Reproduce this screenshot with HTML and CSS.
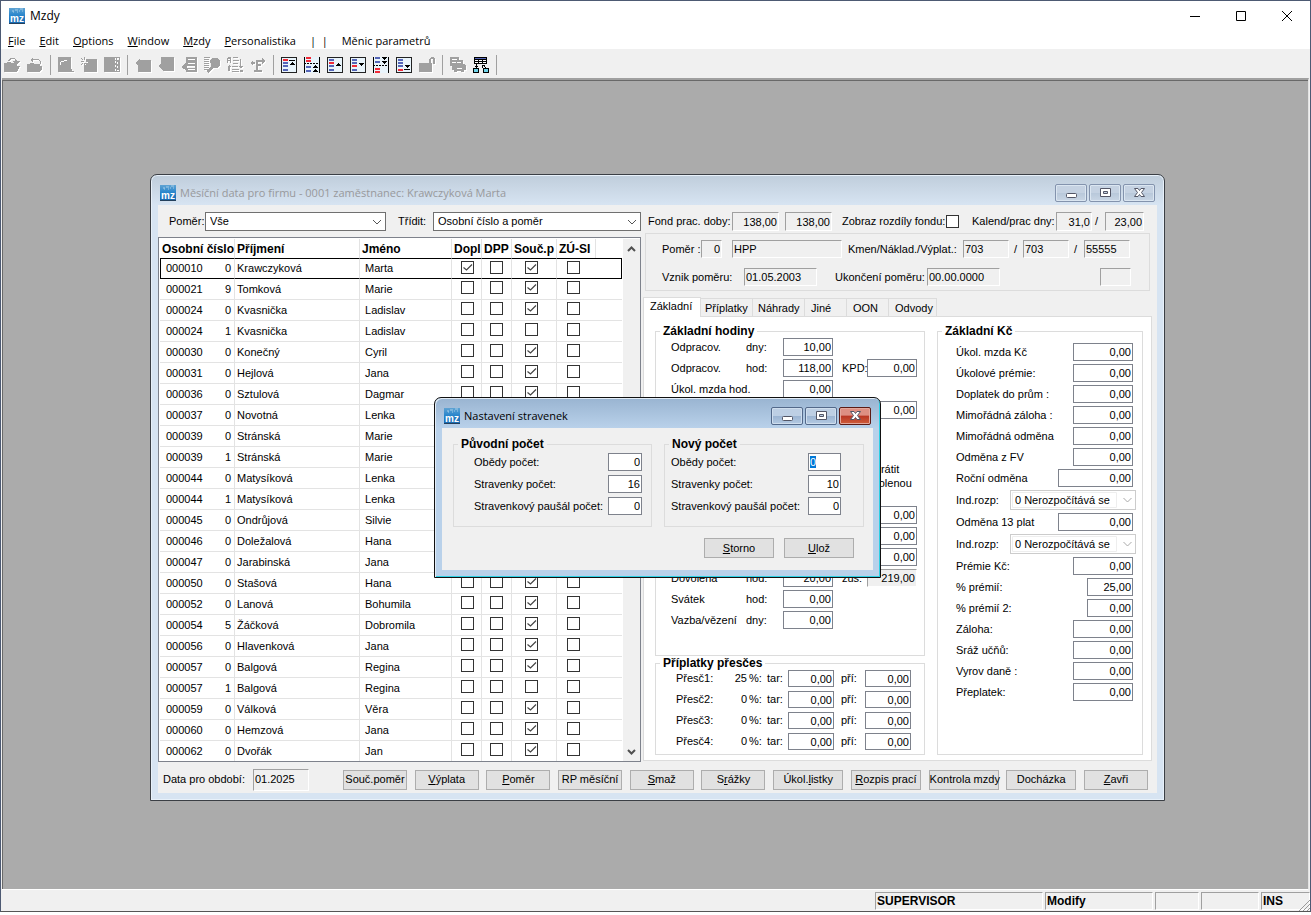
FILE: index.html
```html
<!DOCTYPE html>
<html lang="cs">
<head>
<meta charset="utf-8">
<title>Mzdy</title>
<link rel="stylesheet" href="styles.css">
</head>
<body>
<svg class="defs" aria-hidden="true">
  <defs>
    <linearGradient id="blue" x1="0" y1="0" x2="0" y2="1"><stop offset="0" stop-color="#5fa3d3"/><stop offset=".45" stop-color="#2a86cc"/><stop offset="1" stop-color="#1766ae"/></linearGradient>
    <symbol id="mz" viewBox="0 0 16 16">
      <rect width="16" height="16" fill="url(#blue)"/>
      <path d="M3 3h2M6 2h3M10 3h1M12 1h2M4 4h1M8 4h1M13 3h1M11 1h1" stroke="#a5cde8" stroke-width="1"/>
      <rect y="15" width="16" height="1" fill="#24405c"/>
      <text x="8" y="14" text-anchor="middle" class="mz-text">mz</text>
    </symbol>
    <symbol id="w-min" viewBox="0 0 13 12"><rect x="1.500" y="6.500" width="10" height="4" rx="1" fill="#fff" stroke="#535666"/></symbol>
    <symbol id="w-max" viewBox="0 0 13 12"><path fill-rule="evenodd" d="M1.500 1.500h10v8h-10zM4.500 4.500h4v2h-4z" fill="#fff" stroke="#535666"/></symbol>
    <symbol id="w-close" viewBox="0 0 13 12"><path d="M1.500 1.500h3.500l1.500 2 1.500-2h3.500l-3 4 3 4h-3.500l-1.500-2-1.500 2h-3.500l3-4z" fill="#fff" stroke="#535666"/></symbol>
    <symbol id="page" viewBox="0 0 16 16">
      <rect x=".5" y=".5" width="15" height="15" fill="#e9f4fb" stroke="#222"/>
    </symbol>
  </defs>
</svg>

<div class="app">
  <header class="titlebar">
    <svg class="app-icon"><use href="#mz"/></svg>
    <span class="app-title">Mzdy</span>
    <div class="sys-buttons">
      <button aria-label="Minimalizovat"><svg viewBox="0 0 10 10"><path d="M0 5.500h10"/></svg></button>
      <button aria-label="Maximalizovat"><svg viewBox="0 0 10 10"><path d="M.5.5h9v9h-9z"/></svg></button>
      <button aria-label="Zavřít"><svg viewBox="0 0 10 10"><path d="M0 0l10 10M10 0L0 10"/></svg></button>
    </div>
  </header>

  <nav class="menubar">
    <a href="#"><u>F</u>ile</a><a href="#"><u>E</u>dit</a><a href="#"><u>O</u>ptions</a><a href="#"><u>W</u>indow</a><a href="#"><u>M</u>zdy</a><a href="#"><u>P</u>ersonalistika</a><span>|&nbsp; |</span><a href="#">Měnic parametrů</a>
  </nav>

  <div class="toolbar" role="toolbar" aria-label="Nástroje">
    <button class="off" aria-label="Otevřít"><svg viewBox="0 0 16 16"><path d="M0 6h2l1-1h3l1 1h6v3h3l-3 6H0zM4 4V3l2-2h4l3 2v1h3l-4 4-3-4h2V3l-1-1H7L5 4z"/></svg></button>
    <button class="off" aria-label="Zpět"><svg viewBox="0 0 16 16"><path d="M0 7h2l1-1h3l1 1h6v2h2v3l-2 3H0zM3 3l3-3v2h5l3 2v3h-1V5l-2-2H6v3z"/></svg></button>
    <i></i>
    <button class="off" aria-label="Tisk"><svg viewBox="0 0 16 16"><path fill-rule="evenodd" d="M0 0h13v12h1v2h2v1H0zM2 5v3h1V5h3V4H3zM6 3h3v1H6z"/></svg></button>
    <button class="off" aria-label="Nový"><svg viewBox="0 0 16 16"><path d="M5 2h11v13H3V8h2l-1-2h3V5H5zM3 0h1v3H3zM0 4h3v1H0zM3 6h1v3H3zM0 1h1v1H0zM1 2h1v1H1zM5 2h1v1H5zM1 6h1v1H1zM0 7h1v1H0z"/></svg></button>
    <button class="off" aria-label="Formulář"><svg viewBox="0 0 16 16"><path fill-rule="evenodd" d="M0 0h16v15H0zM11 1v2h1V1zM13 1v2h2V1zM11 4v2h1V4zM13 5v2h1V5zM11 8v2h1V8zM13 9v2h1V9zM11 12v2h1v-2zM13 13v1h2v-1z"/></svg></button>
    <i></i>
    <button class="off" aria-label="Vlevo"><svg viewBox="0 0 16 16"><path d="M0 6l5-4v1h11v12H3V9z"/></svg></button>
    <button class="off" aria-label="Kopie"><svg viewBox="0 0 16 16"><path d="M3 0h13v14H5v-1l-5-4 3-2z"/></svg></button>
    <button class="off" aria-label="Řádky"><svg viewBox="0 0 16 16"><path fill-rule="evenodd" d="M5 0h11v15H5v-2l-5-3 5-4zM7 2v1h7V2zM7 6v1h7V6zM6 9v2h8V9zM7 12v1h7v-1z"/></svg></button>
    <button class="off" aria-label="Hledat"><svg viewBox="0 0 16 16"><path d="M0 0h6v1H0zM0 2h5v1H0zM0 4h5v1H0zM0 6h5v1H0zM0 8h5v1H0zM0 10h5v1H0zM0 12h5v1H0zM6 3l3-2h5l2 3v4l-2 3h-4l-6 5-1-2 4-5z"/></svg></button>
    <button class="off" aria-label="Seřadit"><svg viewBox="0 0 16 16"><path d="M0 1l1-1h2l1 1v5H3V4H1v2H0zM1 2v1h2V2zM6 0h5v1H6zM6 3h6v1H6zM6 6h5v1H6zM5 9h6v1H5zM5 12h7v1H5zM5 14h7v1H5zM13 2h1v7h2l-2 3-2-3h1zM2 8l2 2H3v4H1v-4H0zM13 13h3v2h-3z"/></svg></button>
    <button class="off" aria-label="Přesun"><svg viewBox="0 0 16 16"><path d="M0 6l3-2v1h2v2H3v1zM6 3h6V1l4 3-4 3V5H8v2h3v2H8v4h4v2H4v-2h2z"/></svg></button>
    <i></i>
    <button aria-label="První"><svg viewBox="0 0 16 16"><use href="#page"/><path class="r" d="M2 2h5v2H2z"/><path class="b" d="M2 5h5v2H2zM2 8h5v2H2zM2 12h5v2H2z"/><path class="k" d="M8 3h6v1H8zM11 5l3 3H8z"/></svg></button>
    <button aria-label="Předchozí strana"><svg viewBox="0 0 16 16"><path fill="#e9f4fb" d="M1 0h14v16H1z"/><path class="r" d="M2 0h5v2H2zM2 3h5v2H2z"/><path class="b" d="M2 9h5v2H2zM2 13h5v2H2z"/><path class="k" d="M0 0h1v16H0zM15 0h1v16h-1zM0 6h2v1H0zM3 6h2v1H3zM6 6h2v1H6zM9 6h2v1H9zM12 6h2v1h-2zM11 8l3 3H8zM11 12l3 3H8z"/></svg></button>
    <button aria-label="Předchozí"><svg viewBox="0 0 16 16"><use href="#page"/><path class="r" d="M2 5h5v2H2z"/><path class="b" d="M2 2h5v2H2zM2 8h5v2H2zM2 12h5v2H2z"/><path class="k" d="M11 6l3 3H8z"/></svg></button>
    <button aria-label="Další"><svg viewBox="0 0 16 16"><use href="#page"/><path class="r" d="M2 8h5v2H2z"/><path class="b" d="M2 2h5v2H2zM2 5h5v2H2zM2 12h5v2H2z"/><path class="k" d="M11 9l3-3H8z"/></svg></button>
    <button aria-label="Další strana"><svg viewBox="0 0 16 16"><path fill="#e9f4fb" d="M1 0h14v16H1z"/><path class="b" d="M2 0h5v2H2zM2 4h5v2H2z"/><path class="r" d="M2 11h5v2H2zM2 14h5v2H2z"/><path class="k" d="M0 0h1v16H0zM15 0h1v16h-1zM0 8h2v1H0zM3 8h2v1H3zM6 8h2v1H6zM9 8h2v1H9zM12 8h2v1h-2zM11 3l3-3H8zM11 7l3-3H8z"/></svg></button>
    <button aria-label="Poslední"><svg viewBox="0 0 16 16"><use href="#page"/><path class="r" d="M2 12h5v2H2z"/><path class="b" d="M2 2h5v2H2zM2 5h5v2H2zM2 8h5v2H2z"/><path class="k" d="M8 12h6v1H8zM11 11l3-3H8z"/></svg></button>
    <button class="off" aria-label="Zámek"><svg viewBox="0 0 16 16"><path d="M0 6h10V2l2-2h3l1 2v5h-2V3l-1-1h-1v4h1v9H0z"/></svg></button>
    <i></i>
    <button class="off" aria-label="Tiskárna"><svg viewBox="0 0 16 16"><path fill-rule="evenodd" d="M0 0h9v3h4v4l3 1v5h-2v2h-3v-1H7v1H4v-2H2V9H0zM2 2v1h5V2zM2 5v1h4V5zM7 5v1h4V5zM7 11v1h5v-1z"/></svg></button>
    <button aria-label="Struktura"><svg viewBox="0 0 16 16"><path class="k" d="M1 0h13v7H1z"/><path fill="#5566b8" d="M2 1h11v1H2z"/><path fill="#fff" d="M2 3h3v1H2zM6 3h3v1H6zM10 3h3v1h-3zM2 5h3v1H2zM6 5h3v1H6zM10 5h3v1h-3z"/><path class="k" d="M3 7h1v4H3zM2 9h3v1H2zM9 8h3v1h-2v2H9zM11 9h1v1h-1zM12 10h1v1h-1zM0 11h6v5H0zM10 11h6v5h-6z"/><path fill="#6fd3e8" d="M1 12h4v3H1zM11 12h4v3h-4z"/></svg></button>
    <i></i>
  </div>

  <main class="desktop">
    <section class="window main-window" aria-label="Měsíční data">
      <div class="window-title">
        <svg class="app-icon"><use href="#mz"/></svg>
        <span>Měsíční data pro firmu - 0001 zaměstnanec: Krawczyková Marta</span>
        <div class="window-buttons">
          <button aria-label="Minimalizovat"><svg><use href="#w-min"/></svg></button>
          <button aria-label="Maximalizovat"><svg><use href="#w-max"/></svg></button>
          <button aria-label="Zavřít"><svg><use href="#w-close"/></svg></button>
        </div>
      </div>
      <div class="client">
        <div class="columns">
          <div class="list-side">
            <div class="filters">
              <label for="f-pomer">Poměr:</label>
              <select id="f-pomer"><option>Vše</option></select>
              <label for="f-sort">Třídit:</label>
              <select id="f-sort"><option>Osobní číslo a poměr</option></select>
            </div>
            <div class="list">
              <table>
                <colgroup><col class="c-num"><col class="c-rel"><col class="c-last"><col class="c-first"><col class="c-chk"><col class="c-chk"><col class="c-main"><col class="c-zu"><col></colgroup>
                <thead><tr><th colspan="2">Osobní číslo</th><th>Příjmení</th><th>Jméno</th><th>Dopl</th><th>DPP</th><th>Souč.p</th><th>ZÚ-SI</th><th class="rest"></th></tr></thead>
                <tbody id="people"></tbody>
              </table>
              <div class="scroll">
                <button aria-label="Nahoru"><svg viewBox="0 0 9 6"><path d="M1 5l3.500-3.500L8 5"/></svg></button>
                <button aria-label="Dolů"><svg viewBox="0 0 9 6"><path d="M1 1l3.500 3.500L8 1"/></svg></button>
              </div>
            </div>
          </div>

          <div class="detail-side">
            <div class="fund">
              <label for="fond1">Fond prac. doby:</label>
              <input id="fond1" class="sunk num" value="138,00" readonly>
              <input class="sunk num" aria-label="Fond 2" value="138,00" readonly>
              <label for="rozdily">Zobraz rozdíly fondu:</label>
              <input id="rozdily" type="checkbox">
              <label for="kal">Kalend/prac dny:</label>
              <input id="kal" class="sunk num" value="31,0" readonly>
              <span class="slash">/</span>
              <input class="sunk num" aria-label="Pracovní dny" value="23,00" readonly>
            </div>
            <div class="relation">
              <div class="rel-top">
                <label for="pom">Poměr :</label>
                <input id="pom" class="sunk num w-21" value="0" readonly>
                <input class="sunk w-110" aria-label="Druh poměru" value="HPP" readonly>
                <label for="kmen">Kmen/Náklad./Výplat.:</label>
                <input id="kmen" class="sunk w-46" value="703" readonly><span class="slash">/</span>
                <input class="sunk w-46" aria-label="Nákladové" value="703" readonly><span class="slash">/</span>
                <input class="sunk w-46" aria-label="Výplatní" value="55555" readonly>
              </div>
              <div class="rel-bottom">
                <label for="vznik">Vznik poměru:</label>
                <input id="vznik" class="sunk w-73" value="01.05.2003" readonly>
                <label for="konec">Ukončení poměru:</label>
                <input id="konec" class="sunk w-73" value="00.00.0000" readonly>
                <input class="sunk w-31" aria-label="Kód" readonly>
              </div>
            </div>

            <div class="tabs" role="tablist">
              <button role="tab" aria-selected="true">Základní</button><button role="tab">Příplatky</button><button role="tab" class="mid">Náhrady</button><button role="tab" class="short">Jiné</button><button role="tab" class="short">OON</button><button role="tab" class="last">Odvody</button>
            </div>
            <div class="panel">
              <div class="panel-left">
                <fieldset class="hours">
                  <legend>Základní hodiny</legend>
                  <div class="hour-row"><label for="h1">Odpracov.</label><span>dny:</span><input id="h1" class="num" value="10,00"></div>
                  <div class="hour-row"><label for="h2">Odpracov.</label><span>hod:</span><input id="h2" class="num" value="118,00"><label for="kpd" class="second">KPD:</label><input id="kpd" class="num" value="0,00"></div>
                  <div class="hour-row"><label for="h3" class="wide">Úkol. mzda hod.</label><input id="h3" class="num" value="0,00"></div>
                  <div class="hour-row"><input class="num far" aria-label="Hodiny 4" value="0,00"></div>
                  <div class="hour-note"><p>Krátit<br>dovolenou</p></div>
                  <div class="hour-row"><input class="num far" aria-label="Hodiny 9" value="0,00"></div>
                  <div class="hour-row"><input class="num far" aria-label="Hodiny 10" value="0,00"></div>
                  <div class="hour-row"><input class="num far" aria-label="Hodiny 11" value="0,00"></div>
                  <div class="hour-row"><label for="dov">Dovolená</label><span>hod:</span><input id="dov" class="num" value="20,00"><label for="zus" class="second">zůs:</label><input id="zus" class="sunk num" value="219,00" readonly></div>
                  <div class="hour-row"><label for="sva">Svátek</label><span>hod:</span><input id="sva" class="num" value="0,00"></div>
                  <div class="hour-row"><label for="vaz">Vazba/vězení</label><span>dny:</span><input id="vaz" class="num" value="0,00"></div>
                </fieldset>
                <fieldset class="extra">
                  <legend>Příplatky přesčes</legend>
                  <div class="extra-row"><span>Přesč1:</span><span class="pct">25</span><span>%:</span><label for="t1">tar:</label><input id="t1" class="num" value="0,00"><label for="p1">pří:</label><input id="p1" class="num" value="0,00"></div>
                  <div class="extra-row"><span>Přesč2:</span><span class="pct">0</span><span>%:</span><label for="t2">tar:</label><input id="t2" class="num" value="0,00"><label for="p2">pří:</label><input id="p2" class="num" value="0,00"></div>
                  <div class="extra-row"><span>Přesč3:</span><span class="pct">0</span><span>%:</span><label for="t3">tar:</label><input id="t3" class="num" value="0,00"><label for="p3">pří:</label><input id="p3" class="num" value="0,00"></div>
                  <div class="extra-row"><span>Přesč4:</span><span class="pct">0</span><span>%:</span><label for="t4">tar:</label><input id="t4" class="num" value="0,00"><label for="p4">pří:</label><input id="p4" class="num" value="0,00"></div>
                </fieldset>
              </div>
              <fieldset class="money">
                <legend>Základní Kč</legend>
                <div class="money-row"><label for="m1">Úkol. mzda Kč</label><input id="m1" class="num" value="0,00"></div>
                <div class="money-row"><label for="m2">Úkolové prémie:</label><input id="m2" class="num" value="0,00"></div>
                <div class="money-row"><label for="m3">Doplatek do prům :</label><input id="m3" class="num" value="0,00"></div>
                <div class="money-row"><label for="m4">Mimořádná záloha :</label><input id="m4" class="num" value="0,00"></div>
                <div class="money-row"><label for="m5">Mimořádná odměna</label><input id="m5" class="num" value="0,00"></div>
                <div class="money-row"><label for="m6">Odměna z FV</label><input id="m6" class="num" value="0,00"></div>
                <div class="money-row"><label for="m7">Roční odměna</label><input id="m7" class="num large" value="0,00"></div>
                <div class="money-row pick"><label for="s1">Ind.rozp:</label><select id="s1" disabled><option>0 Nerozpočítává se</option></select></div>
                <div class="money-row"><label for="m8">Odměna 13 plat</label><input id="m8" class="num large" value="0,00"></div>
                <div class="money-row pick"><label for="s2">Ind.rozp:</label><select id="s2" disabled><option>0 Nerozpočítává se</option></select></div>
                <div class="money-row"><label for="m9">Prémie Kč:</label><input id="m9" class="num" value="0,00"></div>
                <div class="money-row"><label for="m10">% prémií:</label><input id="m10" class="num small" value="25,00"></div>
                <div class="money-row"><label for="m11">% prémií 2:</label><input id="m11" class="num small" value="0,00"></div>
                <div class="money-row"><label for="m12">Záloha:</label><input id="m12" class="num" value="0,00"></div>
                <div class="money-row"><label for="m13">Sráž učňů:</label><input id="m13" class="num" value="0,00"></div>
                <div class="money-row"><label for="m14">Vyrov daně :</label><input id="m14" class="num" value="0,00"></div>
                <div class="money-row"><label for="m15">Přeplatek:</label><input id="m15" class="num" value="0,00"></div>
              </fieldset>
            </div>
          </div>
        </div>

        <div class="actions">
          <label for="obdobi">Data pro období:</label>
          <input id="obdobi" class="sunk" value="01.2025" readonly>
          <div class="action-buttons">
            <button>Souč.poměr</button><button><u>V</u>ýplata</button><button><u>P</u>oměr</button><button>RP měsíční</button><button><u>S</u>maž</button><button>S<u>r</u>ážky</button><button class="wide">Úkol.<u>l</u>istky</button><button class="wide"><u>R</u>ozpis prací</button><button class="wide">Kontrola mzdy</button><button class="wide">Docházka</button><button><u>Z</u>avři</button>
          </div>
        </div>
      </div>
    </section>

    <section class="window dialog" role="dialog" aria-label="Nastavení stravenek">
      <div class="window-title">
        <svg class="app-icon"><use href="#mz"/></svg>
        <span>Nastavení stravenek</span>
        <div class="window-buttons">
          <button aria-label="Minimalizovat"><svg><use href="#w-min"/></svg></button>
          <button aria-label="Maximalizovat"><svg><use href="#w-max"/></svg></button>
          <button class="close" aria-label="Zavřít"><svg><use href="#w-close"/></svg></button>
        </div>
      </div>
      <div class="client">
        <div class="meal-groups">
          <fieldset class="old">
            <legend>Původní počet</legend>
            <div class="meal-row"><label for="o1">Obědy počet:</label><input id="o1" class="num" value="0"></div>
            <div class="meal-row"><label for="o2">Stravenky počet:</label><input id="o2" class="num" value="16"></div>
            <div class="meal-row"><label for="o3">Stravenkový paušál počet:</label><input id="o3" class="num" value="0"></div>
          </fieldset>
          <fieldset class="new">
            <legend>Nový počet</legend>
            <div class="meal-row"><label for="n1">Obědy počet:</label><input id="n1" value="0"></div>
            <div class="meal-row"><label for="n2">Stravenky počet:</label><input id="n2" class="num" value="10"></div>
            <div class="meal-row"><label for="n3">Stravenkový paušál počet:</label><input id="n3" class="num" value="0"></div>
          </fieldset>
        </div>
        <div class="dialog-buttons"><button><u>S</u>torno</button><button><u>U</u>lož</button></div>
      </div>
    </section>
  </main>

  <footer class="statusbar">
    <span class="user">SUPERVISOR</span><span class="mode">Modify</span><span class="cell-a"></span><span class="cell-b"></span><span class="ins">INS</span>
    <svg class="grip" viewBox="0 0 12 12"><path d="M1 12L12 1M5 12l7-7M9 12l3-3" stroke="#999" fill="none"/></svg>
  </footer>
</div>
<script src="app.js"></script>
</body>
</html>
```
FILE: styles.css
```css
* { box-sizing: border-box; }
body { margin: 0; min-height: 100vh; background: #fff; font: 11px/13px "Liberation Sans", Arial, sans-serif; color: #000; }
button, input, select { font: inherit; color: inherit; margin: 0; padding: 0; border-radius: 0; outline: none; }
button { cursor: default; }
a { color: inherit; text-decoration: none; }
p { margin: 0; }
.defs { position: absolute; width: 0; height: 0; }
.mz-text { font: bold 10px "Liberation Sans", Arial, sans-serif; fill: #fff; }
.app-icon { width: 16px; height: 16px; flex: none; }

.app { display: flex; flex-direction: column; height: calc(100vh - 3px); background: #f0f0f0; border: 1px solid #4d5a73; border-bottom-color: #555; }

/* application title and menu */
.titlebar { display: flex; align-items: center; height: 29px; padding-left: 8px; background: #fff; font: 12px/16px "Open Sans", sans-serif; }
.app-title { margin-left: 5px; }
.sys-buttons { display: flex; margin-left: auto; }
.sys-buttons button { width: 46px; height: 29px; border: 0; background: none; display: grid; place-items: center; }
.sys-buttons svg { width: 10px; height: 10px; fill: none; stroke: #000; overflow: visible; }
.menubar { display: flex; gap: 14px; align-items: center; height: 19px; padding: 2px 0 0 7px; background: #fff; font: 11px/16px "Open Sans", sans-serif; }
u { text-underline-offset: 1px; }

/* toolbar */
.toolbar { display: flex; align-items: center; height: 29px; padding-top: 2px; }
.toolbar button { width: 23px; height: 23px; padding-right: 1px; border: 0; background: none; display: grid; place-items: center; }
.toolbar svg { width: 16px; height: 16px; shape-rendering: crispEdges; }
.toolbar i { width: 8px; height: 20px; border-left: 1px solid #a0a0a0; margin-left: 3px; margin-right: -3px; }
.off svg { fill: #a0a0a0; filter: drop-shadow(1px 1px 0 #fff); }
.r { fill: #f02b38; }
.b { fill: #5566b8; }
.k { fill: #000; }

/* desktop with its windows */
.desktop { flex: 1; position: relative; margin-left: 1px; margin-right: 1px; background: #ababab; border-top: 2px solid #a0a0a0; border-bottom: 1px solid #fff; border-right: 1px solid #e3e3e3; box-shadow: inset 1px 1px #696969; }
.window { position: absolute; padding: 0 7px 7px; border: 1px solid #3b3f45; border-radius: 7px 7px 0 0; }
.main-window { left: 148px; top: 94px; width: 1015px; background: linear-gradient(#bfcddb, #d7e4f2 30px); box-shadow: inset 0 0 0 1px #e8f1fa; }
.dialog { left: 432px; top: 317px; width: 447px; background: linear-gradient(#99b4d1, #b9d1ea 30px); border-color: #111; box-shadow: inset 1px 1px #e3edf7, inset -1px -1px #2cd0e4; }
.window-title { display: flex; align-items: center; height: 30px; padding: 6px 2px 0; font: 11px/16px "Open Sans", sans-serif; }
.window-title span { margin-left: 4px; }
.main-window .window-title { color: #98999c; }
.window-buttons { display: flex; gap: 2px; margin-left: auto; }
.window-buttons button { display: grid; place-items: center; width: 32px; height: 18px; border: 1px solid #8393ad; border-radius: 2px; background: linear-gradient(#c5d2e2 50%, #b8c8da 50%, #c9d6e5); box-shadow: inset 0 0 0 1px #dbe6f1; }
.window-buttons svg { width: 13px; height: 12px; }
.dialog .window-buttons button { border-color: #53698a; background: linear-gradient(#bdcfe4 50%, #9bb4d2 50%, #b4cae2); box-shadow: inset 0 0 0 1px #cfdeee; }
.dialog .window-buttons .close { border-color: #5c1a14; background: linear-gradient(#dd8f83 45%, #b93624 50%, #cf5e3c); box-shadow: inset 0 0 0 1px #e3a79c; }
.client { background: #f0f0f0; }

/* shared controls */
label, span { white-space: nowrap; }
input { width: 50px; height: 18px; padding: 0 1px; border: 1px solid #7e828c; background: #fff; }
.num { text-align: right; }
.sunk { border-color: #a0a0a0 #fff #fff #a0a0a0; background: #f0f0f0; }
input[type="checkbox"] { appearance: none; display: block; width: 13px; height: 13px; padding: 0; border: 1px solid #333; background: #fff; }
input[type="checkbox"]:checked { background: #fff url("data:image/svg+xml,%3Csvg xmlns='http://www.w3.org/2000/svg' viewBox='0 0 11 11'%3E%3Cpath d='M1.500 5.500L4.500 8L10 2.500' fill='none' stroke='%23444' stroke-width='1.200'/%3E%3C/svg%3E") center / 11px 11px no-repeat; }
input::selection { background: #0078d7; color: #fff; }
select { appearance: none; height: 19px; padding: 0 20px 0 4px; border: 1px solid #707070; background: #fff url("data:image/svg+xml,%3Csvg xmlns='http://www.w3.org/2000/svg' viewBox='0 0 10 6'%3E%3Cpath d='M1 1l4 4l4-4' fill='none' stroke='%23555'/%3E%3C/svg%3E") right 3px center / 10px 6px no-repeat; }
fieldset { --indent: 0px; margin: 0; padding: 0 0 0 var(--indent); border: 1px solid #dcdcdc; min-width: 0; }
legend { margin-left: calc(4px - var(--indent)); padding: 0 3px; font: bold 12px/14px "Liberation Sans", Arial, sans-serif; }

/* employee list */
.columns { display: grid; grid-template-columns: 483px 1fr; }
.filters { display: grid; grid-template-columns: 36px 181px 47px 1fr; align-items: center; height: 32px; padding: 1px 0 0 11px; }
.filters select { min-width: 0; }
.filters label[for="f-sort"] { padding-left: 12px; }
.list { display: flex; padding: 1px 0 0 1px; background: #fff; border: 1px solid #7e828c; }
table { flex: 1; width: 462px; table-layout: fixed; border-collapse: separate; border-spacing: 0; }
.c-num { width: 50px; } .c-rel { width: 25px; } .c-last { width: 125px; } .c-first { width: 92px; }
.c-chk { width: 30px; } .c-main { width: 45px; } .c-zu { width: 39px; }
th { height: 19px; padding: 1px 0 0 2px; text-align: left; font: bold 12px/14px "Liberation Sans", Arial, sans-serif; border-right: 1px solid #e3e3e3; white-space: nowrap; overflow: hidden; }
td { height: 21px; padding: 0 0 0 5px; border-bottom: 1px solid #e3e3e3; border-right: 1px solid #e3e3e3; white-space: nowrap; }
td:nth-child(1) { border-right: 0; padding-left: 6px; }
td:nth-child(2) { text-align: right; padding: 0 3px 0 0; }
td:nth-child(3) { padding-left: 2px; }
td.check { padding: 0 0 3px 9px; }
td.check.dpp { padding-left: 8px; }
td.check.main { padding-left: 13px; }
td.check.zu { padding-left: 10px; border-right: 0; }
td:nth-child(9) { border-right: 0; }
th.rest { border-right: 0; }
tbody tr:last-child td { height: 20px; border-bottom: 0; }
tbody tr.current td { border-top: 1px solid #000; border-bottom: 1px solid #000; }
tbody tr.current td:first-child { border-left: 1px solid #000; padding-left: 5px; }
tbody tr.current td:last-child { border-right: 1px solid #000; }
.scroll { width: 17px; margin-left: 1px; display: flex; flex-direction: column; justify-content: space-between; background: #f0f0f0; }
.scroll button { height: 19px; border: 0; background: none; display: grid; place-items: center; }
.scroll svg { width: 9px; height: 6px; fill: none; stroke: #505050; stroke-width: 2; }

/* detail header */
.detail-side { display: flex; flex-direction: column; padding: 0 5px 1px 2px; }
.fund { display: grid; grid-template-columns: 84px 53px 57px 104px 26px 84px 36px 13px 39px; align-items: center; height: 28px; padding: 5px 0 0 5px; }
.fund .sunk { width: 47px; height: 19px; }
.fund #kal { width: 36px; }
.fund .sunk:last-child { width: 39px; }
.slash { padding-left: 3px; }
.relation { margin: 0 2px; padding: 6px 0 4px 16px; border: 1px solid #dcdcdc; }
.rel-top { display: grid; grid-template-columns: 39px 31px 116px 115px 49px 11px 49px 12px 46px; align-items: center; }
.rel-bottom { display: grid; grid-template-columns: 82px 91px 92px 173px 31px; align-items: center; margin-top: 10px; }
.rel-top .slash { padding-left: 2px; }
.w-21 { width: 21px; } .w-31 { width: 31px; } .w-46 { width: 46px; } .w-73 { width: 73px; } .w-110 { width: 110px; }

/* tabs */
.tabs { display: flex; align-items: flex-end; margin-top: 6px; }
.tabs button { height: 18px; width: 52px; padding: 1px 0 0 4px; text-align: left; border: 1px solid #dcdcdc; border-width: 1px 1px 0 0; background: #f0f0f0; }
.tabs button[aria-selected] { height: 20px; width: 58px; padding: 0 0 2px 6px; margin-bottom: -1px; border-left-width: 1px; background: #fff; position: relative; }
.tabs button.mid { padding-left: 5px; }
.tabs button.short { width: 42px; padding-left: 6px; }
.tabs button.last { width: 48px; padding-left: 6px; }
.panel { flex: 1; display: grid; grid-template-columns: 270px 1fr; gap: 12px; padding: 7px 8px 5px 11px; background: #fff; border: 1px solid #dcdcdc; }
.panel-left { display: grid; grid-template-rows: 1fr auto; }
.hours { --indent: 15px; padding-right: 7px; }
.hour-row { display: grid; grid-template-columns: 75px 37px 59px 25px 50px; align-items: center; height: 21px; padding-bottom: 3px; }
.hour-row .wide { grid-column: span 2; }
.hour-row .far { grid-column: 5; }
.hour-note { display: flex; height: 84px; padding: 40px 0 0 190px; line-height: 14px; text-align: center; }
.extra { --indent: 20px; padding-right: 13px; }
.extra-row { display: grid; grid-template-columns: 40px 33px 18px 21px 53px 24px 46px; align-items: center; height: 21px; padding-bottom: 4px; }
.extra-row input { width: 46px; height: 17px; }
.extra-row .pct { text-align: right; padding-right: 2px; }
.money { --indent: 18px; padding-top: 5px; padding-right: 6px; }
.money-row { display: flex; align-items: center; justify-content: space-between; height: 21px; padding: 0 3px 3px 0; }
.money-row input { width: 60px; }
.money-row .large { width: 75px; }
.money-row .small { width: 46px; }
.money-row.pick { height: 23px; padding-right: 0; }
.money-row select { width: 126px; height: 20px; border-color: #ccc; color: #000; opacity: 1; background: #fff url("data:image/svg+xml,%3Csvg xmlns='http://www.w3.org/2000/svg' viewBox='0 0 124 18'%3E%3Cpath d='M1.500 1.500h104v15h-104z' fill='none' stroke='%23eee'/%3E%3Cpath d='M112.500 7l4 4l4-4' fill='none' stroke='%23aaa'/%3E%3C/svg%3E") 0 0 / 124px 18px no-repeat; }

/* bottom actions */
.actions { display: flex; align-items: center; height: 31px; padding: 4px 9px 0 5px; }
.actions .sunk { width: 56px; height: 22px; margin-left: 8px; padding-bottom: 2px; }
.action-buttons { display: flex; flex: 1; justify-content: space-between; margin-left: 34px; }
.action-buttons button, .dialog-buttons button { width: 64px; height: 20px; border: 1px solid #adadad; background: #e1e1e1; white-space: nowrap; }
.action-buttons .wide, .dialog-buttons button { width: 70px; }

/* meal dialog */
.meal-groups { display: grid; grid-template-columns: 199px 200px; gap: 12px; padding: 9px 9px 0 11px; }
.meal-row { display: flex; align-items: center; justify-content: space-between; height: 22px; padding-bottom: 4px; }
.meal-row input { width: 34px; }
.old, .new { --indent: 20px; padding-top: 2px; padding-right: 9px; padding-bottom: 7px; }
.new { --indent: 6px; padding-right: 22px; }
.new input { width: 33px; }
.dialog-buttons { display: flex; justify-content: flex-end; gap: 10px; padding: 11px 19px 12px; }

/* status bar */
.statusbar { display: flex; gap: 2px; justify-content: flex-end; height: 21px; padding-top: 2px; position: relative; font: bold 12px/16px "Liberation Sans", Arial, sans-serif; }
.statusbar span { height: 18px; padding-left: 1px; border: 1px solid; border-color: #a0a0a0 #fff #fff #a0a0a0; }
.user { width: 168px; } .mode { width: 108px; } .cell-a { width: 44px; } .cell-b { width: 58px; } .ins { width: 49px; }
.grip { position: absolute; right: 0; bottom: 0; width: 12px; height: 12px; }
```
FILE: app.js
```js
const people = [
  ["000010", 0, "Krawczyková", "Marta"], ["000021", 9, "Tomková", "Marie"],
  ["000024", 0, "Kvasnička", "Ladislav"], ["000024", 1, "Kvasnička", "Ladislav"],
  ["000030", 0, "Konečný", "Cyril"], ["000031", 0, "Hejlová", "Jana"],
  ["000036", 0, "Sztulová", "Dagmar"], ["000037", 0, "Novotná", "Lenka"],
  ["000039", 0, "Stránská", "Marie"], ["000039", 1, "Stránská", "Marie"],
  ["000044", 0, "Matysíková", "Lenka"], ["000044", 1, "Matysíková", "Lenka"],
  ["000045", 0, "Ondrůjová", "Silvie"], ["000046", 0, "Doležalová", "Hana"],
  ["000047", 0, "Jarabinská", "Jana"], ["000050", 0, "Stašová", "Hana"],
  ["000052", 0, "Lanová", "Bohumila"], ["000054", 5, "Žáčková", "Dobromila"],
  ["000056", 0, "Hlavenková", "Jana"], ["000057", 0, "Balgová", "Regina"],
  ["000057", 1, "Balgová", "Regina"], ["000059", 0, "Válková", "Věra"],
  ["000060", 0, "Hemzová", "Jana"], ["000062", 0, "Dvořák", "Jan"]
];
const check = (label, on, cls = "") =>
  `<td class="check ${cls}"><input type="checkbox" aria-label="${label}"${on ? " checked" : ""}></td>`;
document.getElementById("people").innerHTML = people.map(([id, rel, last, first], i) =>
  `<tr${i === 0 ? ' class="current"' : ""}><td>${id}</td><td>${rel}</td><td>${last}</td><td>${first}</td>` +
  check("Dopl", i === 0) + check("DPP", false, "dpp") + check("Souč.p", rel !== 1, "main") + check("ZÚ-SI", false, "zu") +
  "<td></td></tr>").join("");
const meals = document.getElementById("n1");
meals.focus();
meals.select();
```
